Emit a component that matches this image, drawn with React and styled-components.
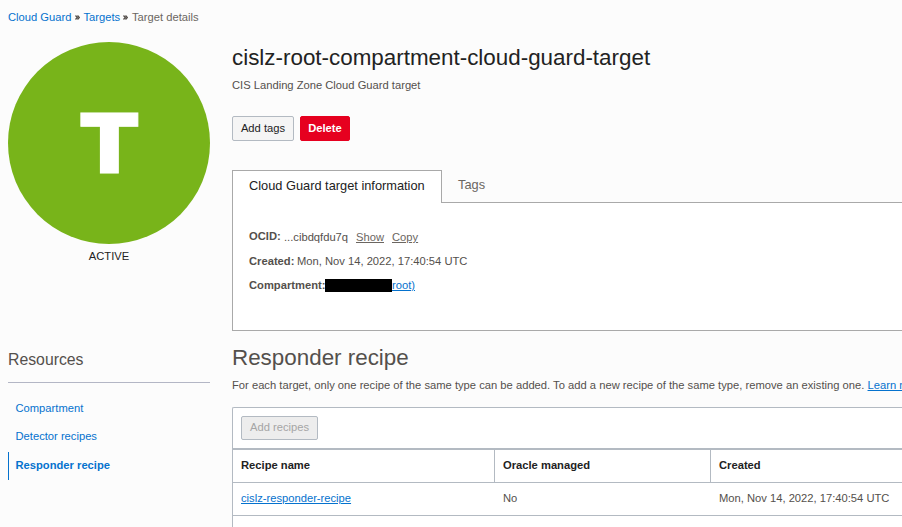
import React from "react";
import styled, { createGlobalStyle } from "styled-components";

const GlobalStyle = createGlobalStyle`
  * { box-sizing: border-box; }
  body {
    margin: 0;
    background: #fcfcfc;
    color: #54504c;
    font: 11.2px/16px "Liberation Sans", Arial, sans-serif;
    overflow: hidden;
  }
  h1, h2, h3, p, ul { margin: 0; padding: 0; font-weight: 400; }
`;

const Page = styled.div`
  width: 902px;
  height: 527px;
  overflow: hidden;
  padding-left: 8px;
  white-space: nowrap;
`;

const Breadcrumbs = styled.nav`
  display: flex;
  height: 42px;
  padding-top: 9px;
`;

const Crumb = styled.a`
  width: ${(p) => (p.$width ? `${p.$width}px` : "auto")};
  color: ${(p) => (p.$current ? "#6b6661" : "#0572ce")};
`;

const Separator = styled.svg`
  flex: none;
  width: 5px;
  height: 5px;
  margin: 6px 4px 0 2px;
  fill: none;
  stroke: #55504c;
  stroke-width: 1.3;
`;

const Columns = styled.div`
  display: grid;
  grid-template-columns: 202px 1fr;
  column-gap: 22px;
`;

const Sidebar = styled.aside`
  display: flex;
  flex-direction: column;
`;

const Avatar = styled.div`
  display: flex;
  align-items: center;
  justify-content: center;
  height: 202px;
  border-radius: 50%;
  background: #78b41a;
  color: #fff;
  font: 900 82.5px/202px Inter, sans-serif;
`;

const Initial = styled.span`
  transform: scaleX(1.09);
  -webkit-text-stroke: 1px #fff;
`;

const Status = styled.div`
  height: 102px;
  padding-top: 4px;
  text-align: center;
  color: #222;
`;

const SideHeading = styled.h3`
  height: 37px;
  padding-top: 4px;
  border-bottom: 1px solid #b3b6c5;
  font-size: 15.8px;
  line-height: 20px;
`;

const SideList = styled.ul`
  padding-top: 12px;
  list-style: none;
`;

const SideItem = styled.li`
  height: 28px;
  margin-top: ${(p) => (p.$active ? 1 : 0)}px;
  padding-left: ${(p) => (p.$active ? 6.5 : 7.5)}px;
  border-left: ${(p) => (p.$active ? "1px solid #0572ce" : "0")};
  line-height: 26px;
  color: #0572ce;
  font-weight: ${(p) => (p.$active ? 700 : 400)};
`;

const Main = styled.main`
  min-width: 0;
`;

const Title = styled.h1`
  height: 35px;
  font-size: 22.4px;
  line-height: 31px;
  color: #222;
`;

const Description = styled.p`
  height: 39px;
`;

const Actions = styled.div`
  display: flex;
  gap: 6px;
  height: 54px;
`;

const Button = styled.button`
  width: ${(p) => p.$width}px;
  height: ${(p) => p.$height || 25}px;
  padding: 0 0 1px;
  border: 1px solid ${(p) => (p.$kind === "danger" ? "#e6001f" : "#b3bac2")};
  border-radius: 2px;
  background: ${(p) =>
    ({ danger: "#e6001f", disabled: "#ededed" })[p.$kind] || "#f5f5f5"};
  color: ${(p) => ({ danger: "#fff", disabled: "#a5a5a5" })[p.$kind] || "#222"};
  font: inherit;
  font-weight: ${(p) => (p.$kind === "danger" ? 700 : 400)};
  line-height: 21px;
`;

const Tabs = styled.div`
  display: flex;
  height: 33px;
`;

const Tab = styled.div`
  flex: ${(p) => (p.$active ? "0 0 210px" : "1")};
  padding-left: 16px;
  border: 1px solid #a9a9a9;
  border-width: ${(p) => (p.$active ? "1px 1px 0 1px" : "0 0 1px 0")};
  background: ${(p) => (p.$active ? "#fff" : "transparent")};
  color: ${(p) => (p.$active ? "#222" : "#6b6661")};
  font-size: 12.8px;
  line-height: 29px;
`;

const Panel = styled.section`
  height: 128px;
  padding: 21px 0 0 16px;
  border: 1px solid #a9a9a9;
  border-width: 0 0 1px 1px;
  background: #fff;
`;

const Field = styled.div`
  display: flex;
  height: 24.5px;
  line-height: 24px;
`;

const Label = styled.b`
  width: ${(p) => p.$width}px;
`;

const Value = styled.span`
  width: ${(p) => (p.$width ? `${p.$width}px` : "auto")};
  padding-top: ${(p) => p.$drop || 0}px;
`;

const Link = styled.a`
  margin-right: ${(p) => p.$gap || 0}px;
  padding-top: ${(p) => p.$drop || 0}px;
  color: ${(p) => (p.$muted ? "#6b6661" : "#0572ce")};
  text-decoration: underline;
  text-underline-offset: 1px;
`;

const Redaction = styled.span`
  width: 67px;
  height: 13px;
  margin-top: 6px;
  background: #000;
`;

const SectionTitle = styled.h2`
  height: 46px;
  padding-top: 11px;
  font-size: 22.4px;
  line-height: 31px;
`;

const Note = styled.p`
  height: 30px;
  letter-spacing: 0.006px;
`;

const TableCard = styled.section`
  height: 130px;
  border: 1px solid #b3bac2;
  border-width: 1px 0 0 1px;
  border-top-left-radius: 2px;
  background: #fff;
`;

const Toolbar = styled.div`
  height: 42px;
  padding: 8px;
  border-bottom: 2px solid #b3bac2;
`;

const Row = styled.div`
  display: grid;
  grid-template-columns: 262px 216px 1fr;
  height: 33px;
  border-bottom: 1px solid #b3bac2;
`;

const Cell = styled.div`
  padding-left: 8px;
  border-right: ${(p) => (p.$header ? "1px solid #b3bac2" : "0")};
  line-height: 31px;
  color: ${(p) => (p.$header ? "#222" : "inherit")};
  font-weight: ${(p) => (p.$header ? 700 : 400)};
  &:last-child { border-right: 0; }
`;

function Chevrons() {
  return (
    <Separator viewBox="0 0 5 5">
      <path d="M.5 .5L2.3 2.5L.5 4.5M2.5 .5L4.3 2.5L2.5 4.5" />
    </Separator>
  );
}

export default function App() {
  return (
    <Page>
      <GlobalStyle />
      <Breadcrumbs>
        <Crumb $width={64.5}>Cloud Guard</Crumb>
        <Chevrons />
        <Crumb $width={37.5}>Targets</Crumb>
        <Chevrons />
        <Crumb $current>Target details</Crumb>
      </Breadcrumbs>
      <Columns>
        <Sidebar>
          <Avatar><Initial>T</Initial></Avatar>
          <Status>ACTIVE</Status>
          <SideHeading>Resources</SideHeading>
          <SideList>
            <SideItem>Compartment</SideItem>
            <SideItem>Detector recipes</SideItem>
            <SideItem $active>Responder recipe</SideItem>
          </SideList>
        </Sidebar>
        <Main>
          <Title>cislz-root-compartment-cloud-guard-target</Title>
          <Description>CIS Landing Zone Cloud Guard target</Description>
          <Actions>
            <Button $width={62}>Add tags</Button>
            <Button $width={50} $kind="danger">Delete</Button>
          </Actions>
          <Tabs>
            <Tab $active>Cloud Guard target information</Tab>
            <Tab>Tags</Tab>
          </Tabs>
          <Panel>
            <Field>
              <Label $width={35}>OCID:</Label>
              <Value $width={72} $drop={1}>...cibdqfdu7q</Value>
              <Link $muted $drop={1} $gap={8}>Show</Link>
              <Link $muted $drop={1}>Copy</Link>
            </Field>
            <Field>
              <Label $width={48}>Created:</Label>
              <Value>Mon, Nov 14, 2022, 17:40:54 UTC</Value>
            </Field>
            <Field>
              <Label $width={76}>Compartment:</Label>
              <Redaction />
              <Link>root)</Link>
            </Field>
          </Panel>
          <SectionTitle>Responder recipe</SectionTitle>
          <Note>
            For each target, only one recipe of the same type can be added. To add a new recipe of the same type, remove an existing one.{" "}
            <Link>Learn more</Link>
          </Note>
          <TableCard>
            <Toolbar>
              <Button $width={77} $height={24} $kind="disabled" disabled>Add recipes</Button>
            </Toolbar>
            <Row>
              <Cell $header>Recipe name</Cell>
              <Cell $header>Oracle managed</Cell>
              <Cell $header>Created</Cell>
            </Row>
            <Row>
              <Cell><Link>cislz-responder-recipe</Link></Cell>
              <Cell>No</Cell>
              <Cell>Mon, Nov 14, 2022, 17:40:54 UTC</Cell>
            </Row>
          </TableCard>
        </Main>
      </Columns>
    </Page>
  );
}
